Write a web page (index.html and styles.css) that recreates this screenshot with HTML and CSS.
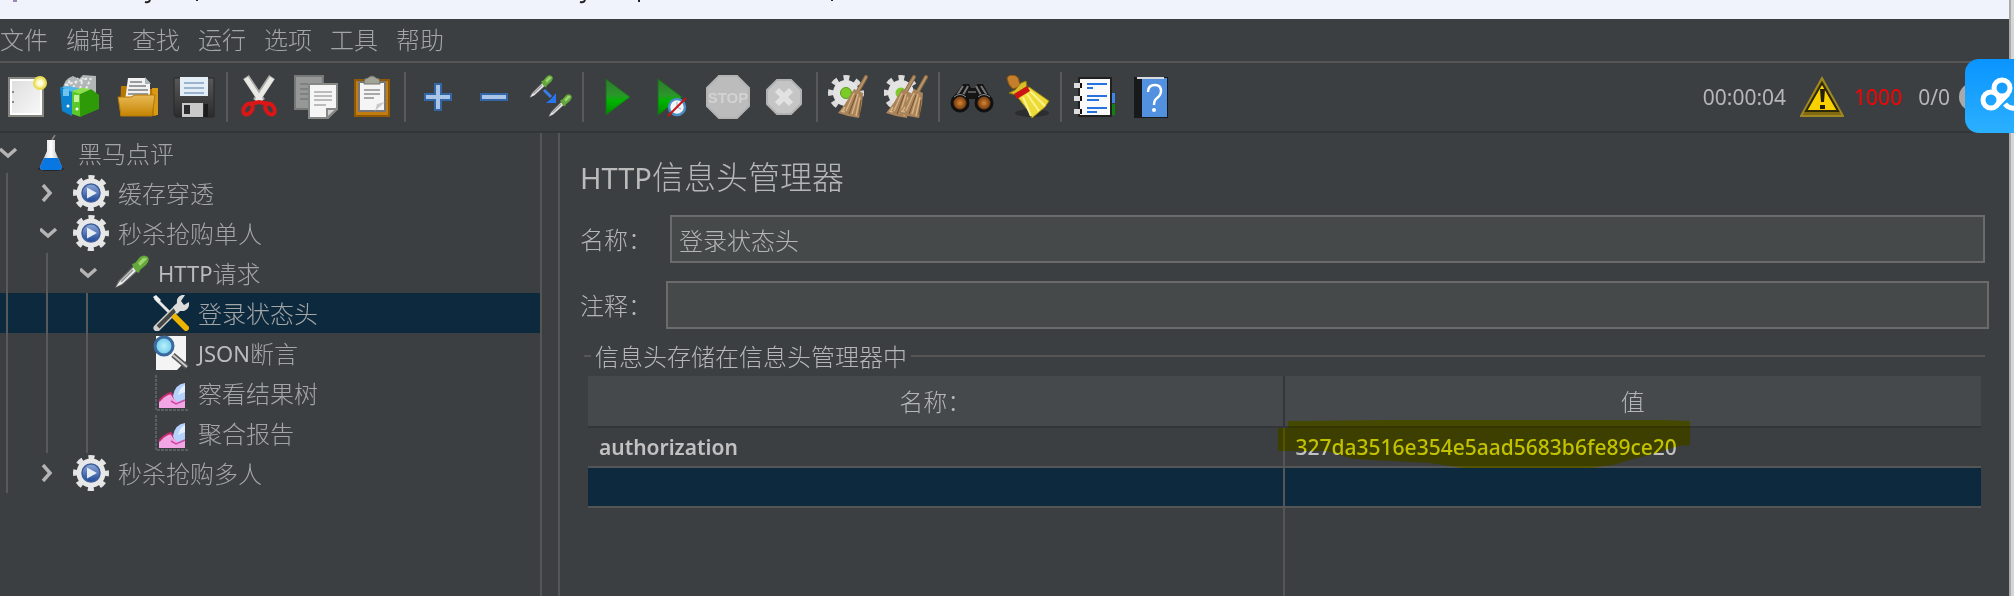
FILE: index.html
```html
<!DOCTYPE html>
<html lang="zh-CN">
<head>
<meta charset="utf-8">
<title>HTTP信息头管理器</title>
<link rel="stylesheet" href="styles.css">
</head>
<body>
<svg class="defs" aria-hidden="true">
  <defs>
    <linearGradient id="gPaper" x1="0" y1="0" x2="1" y2="1"><stop offset="0" stop-color="#dcdcdc"/><stop offset="1" stop-color="#fafafa"/></linearGradient>
    <linearGradient id="gGreen" x1="0" y1="0" x2="0" y2="1"><stop offset="0" stop-color="#2f7a2c"/><stop offset=".45" stop-color="#2b962b"/><stop offset=".6" stop-color="#00b400"/><stop offset="1" stop-color="#008a00"/></linearGradient>
    <linearGradient id="gFolder" x1="0" y1="0" x2="0" y2="1"><stop offset="0" stop-color="#e9b955"/><stop offset="1" stop-color="#c58402"/></linearGradient>
    <linearGradient id="gDisk" x1="0" y1="0" x2="0" y2="1"><stop offset="0" stop-color="#585858"/><stop offset="1" stop-color="#2c2c2e"/></linearGradient>
    <linearGradient id="gBlue" x1="0" y1="0" x2="0" y2="1"><stop offset="0" stop-color="#8fa9d8"/><stop offset="1" stop-color="#1e4796"/></linearGradient>
    <linearGradient id="gFlask" x1="0" y1="0" x2="1" y2="0"><stop offset="0" stop-color="#b9bfc4"/><stop offset=".5" stop-color="#fff"/><stop offset="1" stop-color="#a2a8ad"/></linearGradient>
    <radialGradient id="gLamp"><stop offset="0" stop-color="#d8842f"/><stop offset="1" stop-color="#5a2a08"/></radialGradient>
    <radialGradient id="gLens"><stop offset="0" stop-color="#b8f2fb"/><stop offset="1" stop-color="#6fc8ec"/></radialGradient>
    <symbol id="gear" viewBox="0 0 36 36">
      <circle cx="18" cy="18" r="15" fill="none" stroke="#e4e4e4" stroke-width="6" stroke-dasharray="5.8 5.98" stroke-dashoffset="2.9"/>
      <circle cx="18" cy="18" r="11.5" fill="none" stroke="#e8e8e8" stroke-width="6"/>
      <circle cx="18" cy="18" r="9" fill="url(#gBlue)" stroke="#3c5f9c" stroke-width="1.5"/>
      <path d="M14 12.5 24 18l-10 5.5z" fill="#e6ebf4"/>
    </symbol>
    <symbol id="dropper" viewBox="0 0 36 36">
      <path d="M2 33 5 26 20 11l5 5L9 30z" fill="#6a6c6c"/>
      <path d="M3 32 7 26 21 12l3 3L9 29z" fill="#ececec"/>
      <path d="M8 27 20 15" stroke="#8b8f8f" stroke-width="1.5"/>
      <path d="m19 9 3-1 5-6q4-3 8 0 2 4-2 8l-6 5-1 3q-5-2-7-9z" fill="#62a83a"/>
      <path d="m25 8 5-5q3-1 4 1l-7 7z" fill="#9dd46f"/>
    </symbol>
    <symbol id="chart" viewBox="0 0 36 36">
      <path d="M3 0v35h32" fill="none" stroke="#66696b" stroke-width="1.5" stroke-dasharray="3 1"/>
      <path d="M6 33v-6l4-5 4-3 4-1 6 8 8-2v9z" fill="#f3a6e4"/>
      <path d="m6 26 4-4 5-3 3-1 4 6" fill="none" stroke="#c02c6c" stroke-width="2"/>
      <path d="M20 21q2-12 12-13v17l-6 3-5-4z" fill="#b4d2fb"/>
      <path d="M25 20q2-8 7-10v7z" fill="#e4effe"/>
      <path d="m18 26 5 3 9-4" fill="none" stroke="#d148a8" stroke-width="1.5"/>
    </symbol>
    <symbol id="brush" viewBox="0 0 32 44">
      <path d="M29 2 20 18" stroke="#8a6a45" stroke-width="4" stroke-linecap="round"/>
      <path d="M29 2 21 16" stroke="#b8946a" stroke-width="2" stroke-linecap="round"/>
      <path d="m17 14 9 4-1 11-3 14-11-2-10-3 7-9z" fill="#a9835a"/>
      <path d="m17 18-8 18m12-17-6 20m8-17-4 19M4 36l4 1m0-5-3 5" stroke="#d5b184" stroke-width="1.5"/>
      <path d="m19 20-7 19m12-14-2 15" stroke="#75532f"/>
    </symbol>
    <symbol id="open" viewBox="0 0 18 18"><path d="m0 5 8 7 8-7" fill="none" stroke="#b4b4b4" stroke-width="3.5"/></symbol>
    <symbol id="closed" viewBox="0 0 18 18"><path d="m3 1 7 8-7 8" fill="none" stroke="#b4b4b4" stroke-width="3.5"/></symbol>
  </defs>
</svg>

<div class="screen">
  <div class="window">
    <div class="strip">
      <svg class="marks" viewBox="0 0 860 4" aria-hidden="true"><path d="M13 0h4v2h-4z" fill="#9a86b8"/><path d="M145 2q4 1 5-2M197 0v1" fill="none" stroke="#222" stroke-width="2"/><path d="M580 2q4 1 5-2M639 0v2M832 0v1" fill="none" stroke="#222" stroke-width="2"/></svg>
    </div>

    <nav class="menubar">
      <button>文件</button><button>编辑</button><button>查找</button><button>运行</button><button>选项</button><button>工具</button><button>帮助</button>
    </nav>

    <div class="toolbar">
      <button aria-label="新建"><svg viewBox="0 0 44 44"><path d="M5 3h34v38H5z" fill="url(#gPaper)" stroke="#84867f" stroke-width="2"/><path d="M7 5h30v34H7z" fill="none" stroke="#fff" stroke-width="2"/><path d="M8 16h2v2H8zm0 10h2v2H8z" fill="#888"/><circle cx="36" cy="8" r="6" fill="#f6ef9a" stroke="#e8dc50" stroke-width="2"/><circle cx="36" cy="8" r="3" fill="#fffde0"/></svg></button>
      <button aria-label="模板"><svg viewBox="0 0 44 44"><path d="M3 15q0-11 10-14l6 3 4-4 13 1v18H8z" fill="#b2b6b7"/><path d="m7 13 3-9m3 9 5-10m2 11 3-11m3 11 5-11M5 10l24-7" stroke="#e9ecec" stroke-width="2" stroke-dasharray="3 2"/><path d="m0 12 12 4v25L2 36z" fill="#0c83cf"/><path d="m1 12 8-1 12 3-9 3z" fill="#50b8ee"/><path d="M3 14h6v7H3z" fill="#6fc4ef"/><path d="m12 16 9 2v24l-9-3z" fill="#5cc92a"/><path d="m20 19 11-5 8 6v14l-19 8z" fill="#2e9a08"/><path d="m12 16 9-3 10 1-11 5z" fill="#8de04b"/><path d="M14 20h5v7h-5z" fill="#c8f2a2"/><circle cx="17" cy="34" r="1.5" fill="#fff"/><circle cx="8" cy="31" r="1.5" fill="#fff"/></svg></button>
      <button aria-label="打开"><svg viewBox="0 0 44 44"><path d="M5 11h8l3 3h26l-2 27H4z" fill="#b87800"/><path d="M36 13h6v27h-4z" fill="#d99a18"/><path d="M12 3h17l5 5v18H9z" fill="#f2f2f2"/><path d="m29 2 6 7h-6z" fill="#a9b4b8"/><path d="M14 7h12M13 11h17M12 15h20M12 19h20" stroke="#999c9c" stroke-width="2"/><path d="M2 22h13l4-2h20l-3 21H5z" fill="url(#gFolder)" stroke="#b57906"/></svg></button>
      <button aria-label="保存"><svg viewBox="0 0 44 44"><path d="M2 3h40v39H4l-2-2z" fill="url(#gDisk)" stroke="#29292b"/><path d="M8 2h28v19H8z" fill="#e3eef7"/><path d="M12 8h20M12 13h20M12 18h20" stroke="#9bb4cd" stroke-width="2"/><path d="M10 28h21v14H10z" fill="#c9c9c9"/><path d="M12 30h6v9h-6z" fill="#2b2b2d"/><path d="M32 29h4v13h-4z" fill="#1c1c1e"/></svg></button>
      <span class="sep"></span>
      <button aria-label="剪切"><svg viewBox="0 0 44 44"><path d="m8 2 16 24M34 2 18 26" stroke="#a9aba8" stroke-width="7"/><path d="m8 3 15 23M34 3 19 26" stroke="#e9e9e6" stroke-width="5"/><ellipse cx="10" cy="34" rx="4" ry="6" transform="rotate(35 10 34)" fill="none" stroke="#dc1616" stroke-width="4"/><ellipse cx="32" cy="34" rx="4" ry="6" transform="rotate(-35 32 34)" fill="none" stroke="#dc1616" stroke-width="4"/><path d="m12 29 9-2 10 2" fill="none" stroke="#dc1616" stroke-width="4"/></svg></button>
      <button aria-label="复制"><svg viewBox="0 0 44 44"><path d="M1 1h28v33H1z" fill="#969898" stroke="#777979" stroke-width="2"/><path d="M6 9h18M6 14h10M6 19h10M6 24h10" stroke="#7f8181" stroke-width="2"/><path d="M15 9h28v25l-9 9H15z" fill="#f5f5f5" stroke="#858884" stroke-width="2"/><path d="M20 17h18M20 21h18M20 25h18M20 30h12" stroke="#bcbcbc" stroke-width="2"/><path d="M33 43v-9h10z" fill="#cfd1ce" stroke="#858884" stroke-width="2"/></svg></button>
      <button aria-label="粘贴"><svg viewBox="0 0 44 44"><path d="M5 5h34v36H5z" fill="#c17d11" stroke="#8f5902" stroke-width="2"/><path d="M9 7h26v29H9z" fill="#f5f5f5" stroke="#777" stroke-width="2"/><path d="M14 15h16M14 19h16M14 23h10" stroke="#a8a8a8" stroke-width="2"/><path d="m25 36 2-7 8-2z" fill="#c9cac7"/><path d="M14 7q0-4 4-4 4-4 8 0 4 0 4 4v2H14z" fill="#a3a597" stroke="#70726a"/></svg></button>
      <span class="sep"></span>
      <button aria-label="展开"><svg viewBox="0 0 44 44"><path d="M19 9h6v10h10v6H25v10h-6V25H9v-6h10z" fill="#a9c6e8" stroke="#3465a4" stroke-width="2"/></svg></button>
      <button aria-label="折叠"><svg viewBox="0 0 44 44"><path d="M9 19h26v6H9z" fill="#a9c6e8" stroke="#3465a4" stroke-width="2"/></svg></button>
      <button aria-label="切换"><svg viewBox="0 0 44 44"><use href="#dropper" x="0" y="0" width="25" height="25"/><use href="#dropper" x="19" y="19" width="25" height="25"/><path d="m16 15 7 7" stroke="#3a7eea" stroke-width="3"/><path d="M28 18v10H18l5-4z" fill="#2675f0"/></svg></button>
      <span class="sep"></span>
      <button aria-label="启动"><svg viewBox="0 0 44 44"><path d="m12 4 24 18-24 18z" fill="url(#gGreen)" stroke="#1c6a1c"/></svg></button>
      <button aria-label="不停顿开始"><svg viewBox="0 0 44 44"><path d="m8 4 24 18L8 40z" fill="url(#gGreen)" stroke="#1c6a1c"/><circle cx="27" cy="32" r="8" fill="#f2f5f8" stroke="#4c8ec6" stroke-width="2.5"/><path d="M27 27v5l4 2" fill="none" stroke="#9aaebd"/><path d="m18 41 18-18" stroke="#c81414" stroke-width="2"/></svg></button>
      <button aria-label="停止"><svg viewBox="0 0 44 44"><path d="M13 1h18l12 12v18L31 43H13L1 31V13z" fill="#bcbcbc" stroke="#b4b4b4" stroke-width="2"/><text class="stop-text" x="22" y="28" text-anchor="middle">STOP</text></svg></button>
      <button aria-label="关闭"><svg viewBox="0 0 44 44"><path d="M15 5h14l10 10v14L29 39H15L5 29V15z" fill="#c5c5c5" stroke="#b2b2b2" stroke-width="2"/><path d="m15 15 14 14m0-14L15 29" stroke="#e2e2e2" stroke-width="6"/></svg></button>
      <span class="sep"></span>
      <button aria-label="清除"><svg viewBox="0 0 44 44"><circle cx="18" cy="18" r="15" fill="none" stroke="#dcdcdc" stroke-width="6" stroke-dasharray="5.8 5.98" stroke-dashoffset="2.9"/><circle cx="18" cy="18" r="13" fill="#e4e4e4"/><circle cx="18" cy="18" r="5.5" fill="#7ccc28" stroke="#5a9a20"/><use href="#brush" x="9" y="0" width="32" height="44"/></svg></button>
      <button aria-label="清除全部"><svg viewBox="0 0 44 44"><circle cx="17" cy="18" r="15" fill="none" stroke="#dcdcdc" stroke-width="6" stroke-dasharray="5.8 5.98" stroke-dashoffset="2.9"/><circle cx="17" cy="18" r="13" fill="#e4e4e4"/><circle cx="17" cy="18" r="5.5" fill="#7ccc28"/><use href="#brush" x="1" y="0" width="32" height="44"/><use href="#brush" x="13" y="0" width="32" height="44"/></svg></button>
      <span class="sep"></span>
      <button aria-label="查找"><svg viewBox="0 0 44 44"><path d="M13 9h6l2 4h4l2-4h6l9 16-5 8H27l-2-9h-6l-2 9H6l-5-8z" fill="#151515"/><path d="m13 11-9 14M18 11l-5 9m18-9 9 14M26 11l5 9" stroke="#777" stroke-width="2"/><path d="M18 17h8" stroke="#555" stroke-width="2"/><circle cx="10" cy="28" r="8" fill="url(#gLamp)" stroke="#111" stroke-width="3"/><circle cx="34" cy="28" r="8" fill="url(#gLamp)" stroke="#111" stroke-width="3"/><path d="M4 22q6-5 12 0m12 0q6-5 12 0" fill="none" stroke="#8a8a8a"/></svg></button>
      <button aria-label="重置"><svg viewBox="0 0 44 44"><ellipse cx="26" cy="38" rx="17" ry="4" fill="#2b2d2e"/><path d="M1 4q0-4 6-4 6 1 6 6l2 5-8 3q-5-4-6-10z" fill="#c47f2c" stroke="#85500e"/><path d="m3 18 6-3 6-7 5-2 1 6-11 8z" fill="#d8bd2a" stroke="#8f7a08"/><path d="m10 20 13-8 20 14-4 6-13 11-2-5z" fill="#eedb38" stroke="#9d8a10"/><path d="m17 22 8 19m-4-22 12 17M24 16l15 15" stroke="#fbf48e" stroke-width="2"/><path d="m8 19 13-8 3 5-13 8z" fill="#cc1414"/></svg></button>
      <span class="sep"></span>
      <button aria-label="函数助手"><svg viewBox="0 0 44 44"><path d="M38 18h5v10h-5z" fill="#3f86e8"/><path d="M38 29h5v11h-5z" fill="#11820e"/><path d="M7 3h32v38H7z" fill="#fafafa" stroke="#202020" stroke-width="2"/><path d="M2 8h8v5H2zm0 13h8v5H2zm0 13h8v5H2z" fill="#ddd"/><path d="M8 8h2v5H8zm0 13h2v5H8zm0 13h2v5H8z" fill="#111"/><path d="M15 9h20M15 13h6M15 21h20M15 25h12M15 33h20M15 37h10" stroke="#2672e0" stroke-width="2"/></svg></button>
      <button aria-label="帮助"><svg viewBox="0 0 44 44"><path d="M6 2h34v41H6z" fill="#17191b"/><path d="M14 3h25v39H14z" fill="#5290e0"/><path d="M9 2h27v2H9z" fill="#d7dbe0"/><path d="M20 17q0-7 7-7 6 0 6 6 0 4-4 7-3 2-3 7" fill="none" stroke="#fff" stroke-width="2.5"/><circle cx="26" cy="35" r="2" fill="#fff"/></svg></button>
      <div class="status">
        <span>00:00:04</span>
        <svg class="warn" viewBox="0 0 44 44" aria-label="警告"><path d="M22 3 1 41h42z" fill="#81690f" stroke="#a08820" stroke-width="2"/><path d="M22 8 6 36h32z" fill="#f9d000" stroke="#2d2808" stroke-width="2"/><path d="M20 14h5l-1 13h-3zm0 16h5v4h-5z" fill="#241f0a"/></svg>
        <span class="errors">1000</span>
        <span class="threads">0/0</span>
        <i class="lamp"></i>
      </div>
    </div>

    <div class="main">
      <div class="tree" role="tree">
        <div class="row" role="treeitem"><svg class="arrow"><use href="#open"/></svg><svg class="icon" viewBox="0 0 36 36"><path d="m22 0-3 5" stroke="#888" stroke-width="1.5"/><ellipse cx="18" cy="34" rx="13" ry="2" fill="#242628"/><path d="M14 5h8v11l7 16q0 3-3 3H10q-3 0-3-3l7-16z" fill="url(#gFlask)"/><path d="M11 23h14l4 9q0 3-3 3H10q-3 0-3-3z" fill="#0877e4"/></svg>黑马点评</div>
        <div class="row" role="treeitem"><i class="guide"></i><svg class="arrow"><use href="#closed"/></svg><svg class="icon"><use href="#gear"/></svg>缓存穿透</div>
        <div class="row" role="treeitem"><i class="guide"></i><svg class="arrow"><use href="#open"/></svg><svg class="icon"><use href="#gear"/></svg>秒杀抢购单人</div>
        <div class="row" role="treeitem"><i class="guide"></i><i class="guide"></i><svg class="arrow"><use href="#open"/></svg><svg class="icon"><use href="#dropper"/></svg><span class="latin">HTTP</span>请求</div>
        <div class="row selected" role="treeitem" aria-selected="true"><i class="guide"></i><i class="guide"></i><i class="guide"></i><svg class="arrow"></svg><svg class="icon" viewBox="0 0 36 36"><path d="m2 3 20 20" stroke="#e6e6e6" stroke-width="3"/><path d="m0 2 3-2 5 5-3 3z" fill="#f0f0f0"/><path d="M24 13 4 33" stroke="#d0d0cc" stroke-width="7" stroke-linecap="round"/><path d="M22 15 5 32" stroke="#444746" stroke-width="4"/><path d="m20 12 4-4q-1-6 5-8h3l-4 6 3 4 5-3q1 7-5 9h-4l-3 3z" fill="#dcdcda"/><path d="m22 22 11 11" stroke="#efb400" stroke-width="6" stroke-linecap="round"/></svg>登录状态头</div>
        <div class="row" role="treeitem"><i class="guide"></i><i class="guide"></i><i class="guide"></i><svg class="arrow"></svg><svg class="icon" viewBox="0 0 36 36"><path d="M3 1h30v25l-9 9H3z" fill="#f4f4f4"/><path d="m20 20 14 12" stroke="#555" stroke-width="5"/><path d="m20 20 14 12" stroke="#ccc" stroke-width="2"/><circle cx="11" cy="11" r="9" fill="url(#gLens)" stroke="#3a6a9c" stroke-width="3"/></svg><span class="latin">JSON</span>断言</div>
        <div class="row" role="treeitem"><i class="guide"></i><i class="guide"></i><i class="guide"></i><svg class="arrow"></svg><svg class="icon"><use href="#chart"/></svg>察看结果树</div>
        <div class="row" role="treeitem"><i class="guide"></i><i class="guide"></i><i class="guide"></i><svg class="arrow"></svg><svg class="icon"><use href="#chart"/></svg>聚合报告</div>
        <div class="row" role="treeitem"><i class="guide"></i><svg class="arrow"><use href="#closed"/></svg><svg class="icon"><use href="#gear"/></svg>秒杀抢购多人</div>
      </div>
      <div class="divider"></div>
      <main class="panel">
        <h1><span class="latin">HTTP</span>信息头管理器</h1>
        <div class="field name-field"><label for="name">名称：</label><input id="name" type="text" value="登录状态头"></div>
        <div class="field note-field"><label for="note">注释：</label><input id="note" type="text"></div>
        <fieldset>
          <legend>信息头存储在信息头管理器中</legend>
          <table>
            <thead><tr><th>名称：</th><th>值</th></tr></thead>
            <tbody>
              <tr><td>authorization</td><td class="marked">327da3516e354e5aad5683b6fe89ce20<svg class="marker" viewBox="0 0 412 48" aria-hidden="true"><path d="M10 1 112 0h273l27 1v24q-16 1-30 7l-30 8-17 5-23 3H185l-33-5-77-4-26-8H0V8h10z" fill="#ff0"/></svg></td></tr>
              <tr class="picked"><td></td><td></td></tr>
              <tr class="rest"><td></td><td></td></tr>
            </tbody>
          </table>
        </fieldset>
      </main>
    </div>
  </div>
  <div class="edge"></div>
  <button class="cloud" aria-label="网盘"><svg viewBox="0 0 49 74"><g fill="none" stroke="#fff" stroke-width="5"><circle cx="37" cy="29" r="8"/><circle cx="26" cy="41" r="8"/><path d="m31 47 12-12M40 45q4 5 10 4"/></g></svg></button>
</div>
</body>
</html>
```

FILE: styles.css
```css
* { box-sizing: border-box; }

body {
  margin: 0;
  background: #3c3f41;
  color: #b4b6b7;
  font: 24px/32px "Noto Sans CJK SC", sans-serif;
  font-weight: 300;
}

button, input {
  font: inherit;
  color: inherit;
}

button {
  border: 0;
  padding: 0;
  background: none;
}

.defs {
  position: absolute;
  width: 0;
  height: 0;
}

.screen {
  position: relative;
  display: flex;
  height: 100vh;
  overflow: hidden;
}

.window {
  flex: 1;
  min-width: 0;
  display: flex;
  flex-direction: column;
}

.edge {
  width: 5px;
  border-left: 2px solid #aaa;
  background: #d6d6d6;
}

.strip {
  height: 19px;
  background: #f0f3fb;
}

.marks {
  display: block;
  width: 860px;
  height: 4px;
}

.menubar {
  display: flex;
  gap: 18px;
  height: 44px;
  align-items: center;
  padding-bottom: 2px;
  border-bottom: 2px solid #555;
  color: #a3a5a6;
}

.toolbar {
  display: flex;
  align-items: center;
  gap: 4px;
  height: 70px;
  border-bottom: 2px solid #323638;
}

.toolbar button {
  width: 52px;
  height: 52px;
  display: grid;
  place-items: center;
}

.toolbar svg {
  width: 44px;
  height: 44px;
}

.sep {
  width: 6px;
  height: 50px;
  border: solid #3c3f41;
  border-width: 0 2px;
  background: #595959;
}

.stop-text {
  font: bold 15px "Liberation Sans", sans-serif;
  fill: #d2d2d2;
}

.status {
  margin-left: auto;
  padding-right: 22px;
  display: flex;
  align-items: center;
  font-family: "Noto Sans", sans-serif;
  font-size: 21px;
  font-weight: 400;
}

.warn { margin: 0 10px 0 14px; }

.errors { color: #f00; }

.threads { margin-left: 16px; }

.lamp {
  width: 28px;
  height: 28px;
  margin-left: 9px;
  border-radius: 50%;
  background: #a9a9a9;
}

.main {
  flex: 1;
  min-height: 0;
  display: flex;
}

.tree {
  flex: 0 0 540px;
  color: #a3a5a6;
}

.row {
  display: flex;
  align-items: center;
  height: 40px;
}

.row.selected { background: #0d293e; }

.guide {
  align-self: stretch;
  width: 40px;
  padding-left: 6px;
}

.guide::before {
  content: "";
  display: block;
  width: 2px;
  height: 100%;
  background: #595959;
}

.arrow {
  width: 18px;
  height: 18px;
  margin-right: 15px;
}

.icon {
  width: 36px;
  height: 36px;
  margin-right: 9px;
}

.latin {
  font-family: "Noto Sans", sans-serif;
  font-size: 22px;
  font-weight: 400;
  color: #bbb;
}

.divider {
  flex: 0 0 20px;
  border: solid #555;
  border-width: 0 2px;
}

.panel {
  flex: 1;
  min-width: 0;
  display: flex;
  flex-direction: column;
  padding: 18px 20px 0 20px;
}

h1 {
  margin: 0 0 13px;
  font-size: 32px;
  line-height: 48px;
  font-weight: 300;
}

h1 .latin { font-size: 29px; }

.field {
  display: flex;
  align-items: center;
  height: 48px;
  margin-bottom: 18px;
}

.field input {
  flex: 1;
  min-width: 0;
  height: 48px;
  border: 2px solid #6b6b6b;
  border-radius: 0;
  padding: 0 7px;
  background: #45494a;
}

.name-field {
  gap: 18px;
  padding-right: 4px;
}

.note-field {
  gap: 14px;
  margin-bottom: 11px;
}

fieldset {
  flex: 1;
  min-width: 0;
  display: flex;
  flex-direction: column;
  margin: 0 4px;
  border: 0 solid #555;
  border-top-width: 2px;
  padding: 4px 4px 0;
}

legend {
  margin-left: 3px;
  padding: 0 4px;
}

table {
  width: 100%;
  height: 220px;
  flex: 1;
  table-layout: fixed;
  border-collapse: separate;
  border-spacing: 0;
}

th {
  height: 52px;
  padding: 0;
  border-bottom: 2px solid #323638;
  background: #45494b;
  font-weight: 300;
}

th:first-child { border-right: 2px solid #323638; }

td {
  height: 40px;
  padding: 0 11px;
  border-bottom: 2px solid #555;
  font-family: "Noto Sans", sans-serif;
  font-size: 21px;
  line-height: 30px;
  font-weight: 600;
  color: #c2c2c2;
}

td:first-child { border-right: 2px solid #555; }

.picked td { background: #0d293e; }

.rest td {
  height: auto;
  border-bottom: 0;
}

.marked {
  position: relative;
  font-weight: 500;
}

.marker {
  position: absolute;
  left: -7px;
  top: -8px;
  width: 412px;
  height: 48px;
  mix-blend-mode: multiply;
}

.cloud {
  position: absolute;
  right: 0;
  top: 59px;
  width: 49px;
  height: 74px;
  border-radius: 14px 0 0 14px;
  background: linear-gradient(#0a94ff, #2bb0ff);
}

.cloud svg {
  display: block;
  width: 49px;
  height: 74px;
}
```
